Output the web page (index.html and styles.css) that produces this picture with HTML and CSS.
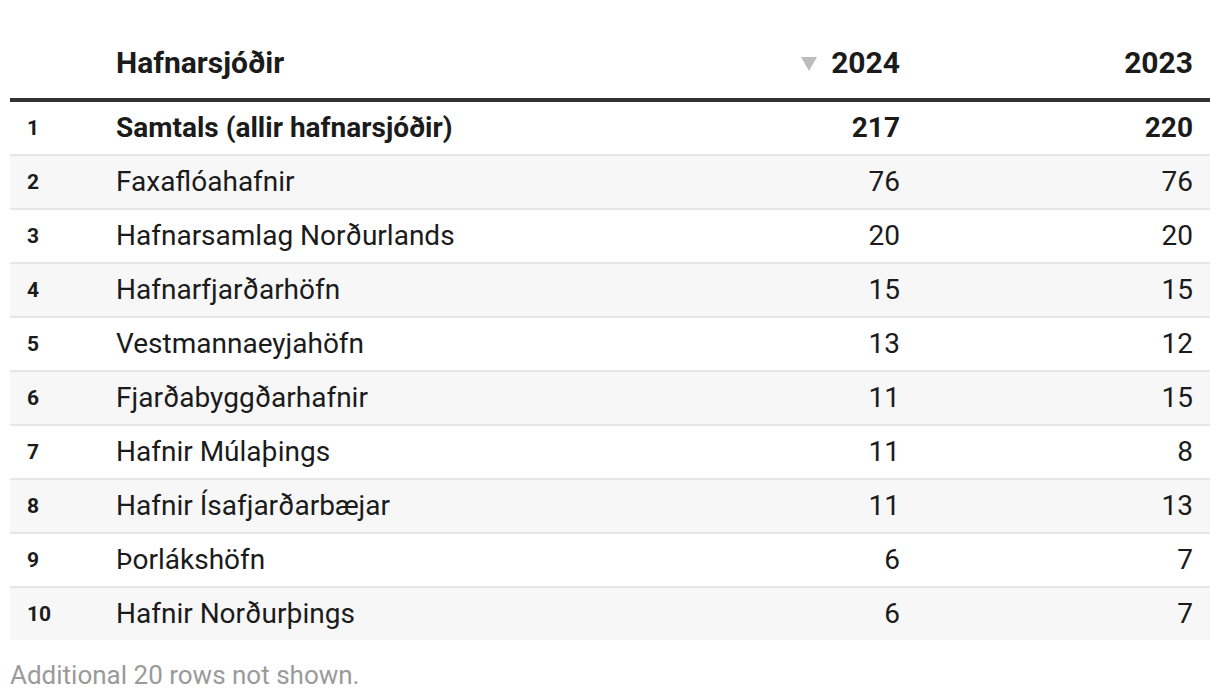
FILE: index.html
```html
<!DOCTYPE html>
<html lang="is">
<head>
<meta charset="utf-8">
<title>Hafnarsjóðir</title>
<link rel="stylesheet" href="styles.css">
</head>
<body>
<div class="wrap">
<table class="tbl">
  <colgroup>
    <col class="c-rank"><col class="c-name"><col class="c-y1"><col class="c-y2">
  </colgroup>
  <thead>
    <tr>
      <th class="rank"></th>
      <th class="name">Hafnarsjóðir</th>
      <th class="num"><span class="sort"></span>2024</th>
      <th class="num">2023</th>
    </tr>
  </thead>
  <tbody>
    <tr class="total"><td class="rank">1</td><td class="name">Samtals (allir hafnarsjóðir)</td><td class="num">217</td><td class="num">220</td></tr>
    <tr><td class="rank">2</td><td class="name">Faxaflóahafnir</td><td class="num">76</td><td class="num">76</td></tr>
    <tr><td class="rank">3</td><td class="name">Hafnarsamlag Norðurlands</td><td class="num">20</td><td class="num">20</td></tr>
    <tr><td class="rank">4</td><td class="name">Hafnarfjarðarhöfn</td><td class="num">15</td><td class="num">15</td></tr>
    <tr><td class="rank">5</td><td class="name">Vestmannaeyjahöfn</td><td class="num">13</td><td class="num">12</td></tr>
    <tr><td class="rank">6</td><td class="name">Fjarðabyggðarhafnir</td><td class="num">11</td><td class="num">15</td></tr>
    <tr><td class="rank">7</td><td class="name">Hafnir Múlaþings</td><td class="num">11</td><td class="num">8</td></tr>
    <tr><td class="rank">8</td><td class="name">Hafnir Ísafjarðarbæjar</td><td class="num">11</td><td class="num">13</td></tr>
    <tr><td class="rank">9</td><td class="name">Þorlákshöfn</td><td class="num">6</td><td class="num">7</td></tr>
    <tr><td class="rank">10</td><td class="name">Hafnir Norðurþings</td><td class="num">6</td><td class="num">7</td></tr>
  </tbody>
</table>
<p class="note">Additional 20 rows not shown.</p>
</div>
</body>
</html>
```
FILE: styles.css
```css
html, body {
  margin: 0;
  padding: 0;
  background: #ffffff;
}
body {
  font-family: Roboto, "Liberation Sans", sans-serif;
  color: #1b1b1b;
}
.wrap {
  padding: 0 10px;
}
.tbl {
  width: 1200px;
  border-collapse: collapse;
  table-layout: fixed;
}
.c-rank { width: 90px; }
.c-name { width: 617px; }
.c-y1 { width: 200px; }
.c-y2 { width: 293px; }
.tbl th {
  height: 100px;
  box-sizing: border-box;
  vertical-align: bottom;
  padding: 0 17px 18px 16px;
  font-size: 30px;
  font-weight: 700;
  line-height: 34px;
  border-bottom: 4px solid #333333;
  text-align: left;
}
.tbl th.num {
  text-align: right;
}
.sort {
  display: inline-block;
  width: 0;
  height: 0;
  border-left: 8px solid transparent;
  border-right: 8px solid transparent;
  border-top: 14px solid #bcbcbc;
  margin-right: 14px;
  vertical-align: 2px;
}
.tbl td {
  height: 52px;
  padding: 0 17px 0 16px;
  font-size: 28px;
  line-height: 32px;
  vertical-align: middle;
  border-top: 2px solid #e6e6e6;
}
.tbl tbody tr:first-child td {
  border-top: none;
}
.tbl tbody tr:nth-child(even) td {
  background: #f7f7f7;
}
.tbl td.rank {
  padding-left: 17px;
  font-size: 21px;
  font-weight: 700;
}
.tbl td.num {
  text-align: right;
}
.tbl tr.total td {
  font-weight: 700;
}
.note {
  margin: 20px 0 0;
  font-size: 26px;
  line-height: 30px;
  color: #9a9a9a;
}
```
